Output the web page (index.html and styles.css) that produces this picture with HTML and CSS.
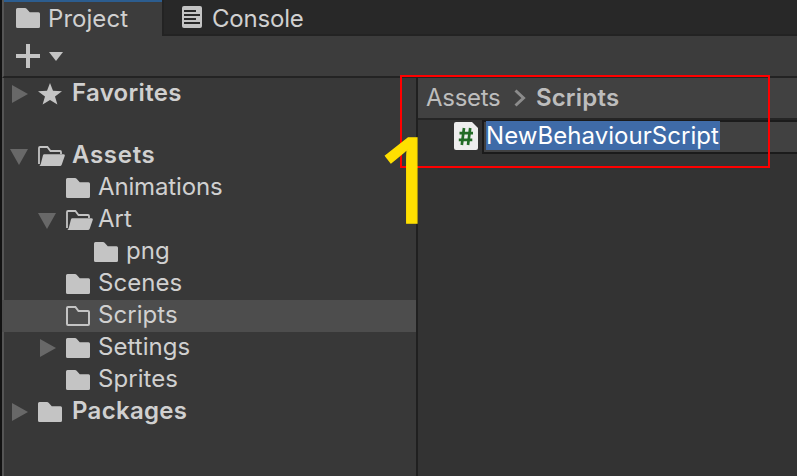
FILE: index.html
```html
<!DOCTYPE html>
<html lang="en">
<head>
<meta charset="utf-8">
<title>Project</title>
<link rel="stylesheet" href="styles.css">
</head>
<body>
<svg class="defs" width="0" height="0">
  <symbol id="folder" viewBox="0 0 28 20"><path d="M0 1.5Q0 0 1.5 0H9Q10 0 10.6 .8L13.8 4.2H22.5Q24 4.2 24 5.7V18.5Q24 20 22.5 20H1.5Q0 20 0 18.5Z" fill="currentColor"/></symbol>
  <symbol id="empty" viewBox="0 0 28 20"><path d="M1 2Q1 1 2 1H9.4L12.5 5H22Q23 5 23 6V18Q23 19 22 19H2Q1 19 1 18Z" fill="none" stroke="currentColor" stroke-width="2"/></symbol>
  <symbol id="open" viewBox="0 0 28 20"><path d="M1 18V2Q1 1 2 1H9.4L12.5 5H22Q23 5 23 6V8" fill="none" stroke="currentColor" stroke-width="1.8"/><path d="M6.2 8.2H25.5Q27.4 8.2 26.8 9.8L23.8 18.5Q23.2 20 22 20H1.2Q2.3 19.5 2.8 17.8L5 9.3Q5.3 8.2 6.2 8.2Z" fill="currentColor"/></symbol>
  <symbol id="star" viewBox="0 0 24 22"><path d="M12 0L15 7.8L24 8.2L17 13.4L19.4 21.6L12 17L4.6 21.6L7 13.4L0 8.2L9 7.8Z" fill="currentColor"/></symbol>
  <symbol id="right" viewBox="0 0 18 18"><path d="M2 0L18 9L2 18Z" fill="currentColor"/></symbol>
  <symbol id="down" viewBox="0 0 18 18"><path d="M0 2H18L9 18Z" fill="currentColor"/></symbol>
</svg>
<div class="window">
  <div class="tabs">
    <div class="tab active"><svg class="icon"><use href="#folder"/></svg><span>Project</span></div>
    <div class="tab console"><svg class="log" viewBox="0 0 20 22"><rect width="20" height="22" rx="2" fill="#c4c4c4"/><path d="M2 5H14M2 9H18M2 13H14M2 17H18" stroke="#282828" stroke-width="2"/></svg><span>Console</span></div>
  </div>
  <div class="toolbar">
    <svg class="plus" viewBox="0 0 24 24"><path d="M0 12H24M12 0V24" stroke="#c4c4c4" stroke-width="4"/></svg>
    <svg class="caret" viewBox="0 0 14 9"><path d="M0 0H14L7 9Z" fill="#c4c4c4"/></svg>
  </div>
  <div class="panes">
    <div class="tree">
      <div class="row top favorites"><svg class="arrow"><use href="#right"/></svg><svg class="star"><use href="#star"/></svg><b>Favorites</b></div>
      <div class="row top"><svg class="arrow"><use href="#down"/></svg><svg class="icon"><use href="#open"/></svg><b class="wide">Assets</b></div>
      <div class="row child"><svg class="icon"><use href="#folder"/></svg><span class="tight">Animations</span></div>
      <div class="row child"><svg class="arrow"><use href="#down"/></svg><svg class="icon"><use href="#open"/></svg><span>Art</span></div>
      <div class="row nested"><svg class="icon"><use href="#folder"/></svg><span>png</span></div>
      <div class="row child"><svg class="icon"><use href="#folder"/></svg><span>Scenes</span></div>
      <div class="row child selected"><svg class="icon"><use href="#empty"/></svg><span>Scripts</span></div>
      <div class="row child"><svg class="arrow"><use href="#right"/></svg><svg class="icon"><use href="#folder"/></svg><span>Settings</span></div>
      <div class="row child"><svg class="icon"><use href="#folder"/></svg><span>Sprites</span></div>
      <div class="row top"><svg class="arrow"><use href="#right"/></svg><svg class="icon"><use href="#folder"/></svg><b>Packages</b></div>
    </div>
    <div class="content">
      <div class="crumbs"><span>Assets</span><svg class="chevron" viewBox="0 0 12 18"><path d="M1.5 1.5L9.5 9L1.5 16.5" fill="none" stroke="#8c8c8c" stroke-width="3"/></svg><b>Scripts</b></div>
      <div class="asset">
        <svg class="script" viewBox="0 0 24 28"><path d="M2 0H18L24 6V26Q24 28 22 28H2Q0 28 0 26V2Q0 0 2 0Z" fill="#eee"/><path d="M10 6L7.8 23M16.2 6L14 23M5.5 11.2H19M4.8 17.8H18.3" fill="none" stroke="#226b26" stroke-width="2.7"/></svg>
        <div class="field"><span class="name">NewBehaviourScript</span></div>
      </div>
    </div>
  </div>
</div>
<div class="highlight"></div>
<div class="step">1</div>
</body>
</html>
```
FILE: styles.css
```css
* { box-sizing: border-box; }
body { margin: 0; width: 797px; height: 476px; overflow: hidden; background: #383838; color: #d0d0d0; font: 24px/32px Inter, sans-serif; letter-spacing: 0.05px; }
b { font-weight: 600; letter-spacing: 0.3px; }
.wide { letter-spacing: 0.7px; }
.tight { letter-spacing: -0.15px; }
svg { display: block; flex: none; }
.defs { position: absolute; }
.window { height: 476px; display: flex; flex-direction: column; border-left: 2px solid #121212; }
.tabs { display: flex; height: 36px; background: #3c3c3c; border-left: 2px solid #555; }
.tab { display: flex; align-items: center; }
.active { width: 158px; border-top: 2px solid #2c5d8f; padding-left: 12px; gap: 4px; }
.console { flex: 1; background: #282828; border-left: 2px solid #232323; border-bottom: 2px solid #232323; padding-left: 18px; gap: 10px; letter-spacing: -0.2px; }
.console span { padding-top: 3px; }
.active span { margin-top: -1px; }
.log { width: 20px; height: 22px; }
.toolbar { display: flex; align-items: center; height: 42px; background: #3c3c3c; border-left: 2px solid #555; border-bottom: 2px solid #232323; padding-left: 12px; gap: 9px; }
.plus { width: 24px; height: 24px; }
.caret { width: 14px; height: 9px; }
.panes { display: flex; flex: 1; min-height: 0; }
.tree { width: 416px; border-right: 2px solid #202020; background: linear-gradient(90deg, #555 2px, #383838 2px); }
.row { display: flex; align-items: center; height: 32px; }
.favorites { margin-bottom: 30px; }
.icon { width: 28px; height: 20px; color: #c4c4c4; margin-right: 4px; }
.active .icon { margin: -2px 0 0; }
.star { width: 24px; height: 22px; color: #c4c4c4; margin-right: 10px; }
.arrow { width: 18px; height: 18px; color: #686868; }
.row span, .row b { height: 32px; line-height: 30px; }
.top { padding-left: 8px; }
.top .arrow { margin-right: 10px; }
.top b { margin-left: 2px; }
.top .star + b { margin-left: 0; }
.child { padding-left: 64px; }
.child .arrow { margin-left: -28px; margin-right: 10px; }
.nested { padding-left: 92px; }
.selected { background: #4d4d4d; }
.content { flex: 1; background: #333; }
.crumbs { display: flex; align-items: center; height: 42px; background: #414141; border-bottom: 2px solid #252525; padding-left: 8px; color: #bdbdbd; letter-spacing: -0.3px; }
.crumbs b { letter-spacing: 0.2px; }
.chevron { width: 12px; height: 18px; margin: 0 10px 0 13.5px; }
.asset { display: flex; align-items: center; height: 34px; padding-left: 36px; }
.script { width: 24px; height: 28px; margin: 0 4px 2px 0; }
.field { flex: 1; height: 34px; border: 2px solid #1b1b1b; border-right: 0; background: #414141; padding-left: 2px; display: flex; letter-spacing: 0.05px; }
.name { height: 29px; margin-top: -1px; line-height: 29px; background: #3f6ba8; color: #fff; width: 234px; }
.highlight { position: absolute; left: 400px; top: 75px; width: 370px; height: 93px; border: 2px solid #f00; }
.step { position: absolute; left: 375px; top: 118px; color: #ffe000; -webkit-text-stroke: 1.3px #ffe000; font: 118px/120px "Noto Sans", sans-serif; letter-spacing: 0; }
```
